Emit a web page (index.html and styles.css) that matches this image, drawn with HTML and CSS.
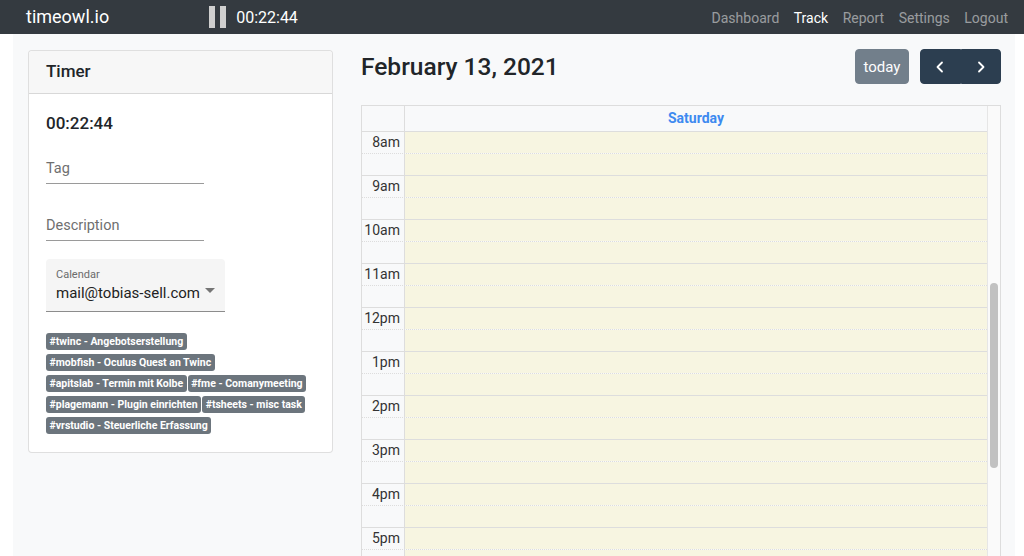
FILE: index.html
```html
<!DOCTYPE html>
<html lang="en">
<head>
<meta charset="utf-8">
<title>timeowl.io</title>
<link rel="stylesheet" href="styles.css">
</head>
<body>
<nav class="navbar">
  <a class="brand" href="#">timeowl.io</a>
  <div class="running">
    <span class="pause"><span class="bar"></span><span class="bar"></span></span>
    <span class="running-time">00:22:44</span>
  </div>
  <ul class="nav">
    <li><a href="#">Dashboard</a></li>
    <li><a href="#" class="active">Track</a></li>
    <li><a href="#">Report</a></li>
    <li><a href="#">Settings</a></li>
    <li><a href="#">Logout</a></li>
  </ul>
</nav>
<main class="page">
  <section class="card">
    <div class="card-header">Timer</div>
    <div class="card-body">
      <div class="timer">00:22:44</div>
      <div class="field field-tag"><span class="field-label">Tag</span></div>
      <div class="field field-desc"><span class="field-label">Description</span></div>
      <div class="select">
        <span class="select-label">Calendar</span>
        <span class="select-value">mail@tobias-sell.com</span>
        <span class="select-arrow"></span>
      </div>
      <div class="badges">
        <span class="badge">#twinc - Angebotserstellung</span>
        <span class="badge">#mobfish - Oculus Quest an Twinc</span>
        <span class="badge">#apitslab - Termin mit Kolbe</span>
        <span class="badge">#fme - Comanymeeting</span>
        <span class="badge">#plagemann - Plugin einrichten</span>
        <span class="badge">#tsheets - misc task</span>
        <span class="badge">#vrstudio - Steuerliche Erfassung</span>
      </div>
    </div>
  </section>
  <section class="calendar-col">
    <div class="toolbar">
      <h2 class="title">February 13, 2021</h2>
      <div class="toolbar-buttons">
        <button class="btn btn-today">today</button>
        <div class="btn-group">
          <button class="btn btn-nav" aria-label="prev"><svg width="14" height="14" viewBox="0 0 14 14"><path d="M9 2.5 4.5 7 9 11.5" fill="none" stroke="#fff" stroke-width="1.8" stroke-linecap="round" stroke-linejoin="round"/></svg></button>
          <button class="btn btn-nav" aria-label="next"><svg width="14" height="14" viewBox="0 0 14 14"><path d="M5 2.5 9.5 7 5 11.5" fill="none" stroke="#fff" stroke-width="1.8" stroke-linecap="round" stroke-linejoin="round"/></svg></button>
        </div>
      </div>
    </div>
    <div class="cal">
      <div class="cal-main">
        <div class="cal-head">
          <div class="axis-head"></div>
          <div class="day-head"><a href="#">Saturday</a></div>
        </div>
        <div class="cal-body">
          <div class="slot"><div class="axis">8am</div><div class="day"></div></div>
          <div class="slot minor"><div class="axis"></div><div class="day"></div></div>
          <div class="slot"><div class="axis">9am</div><div class="day"></div></div>
          <div class="slot minor"><div class="axis"></div><div class="day"></div></div>
          <div class="slot"><div class="axis">10am</div><div class="day"></div></div>
          <div class="slot minor"><div class="axis"></div><div class="day"></div></div>
          <div class="slot"><div class="axis">11am</div><div class="day"></div></div>
          <div class="slot minor"><div class="axis"></div><div class="day"></div></div>
          <div class="slot"><div class="axis">12pm</div><div class="day"></div></div>
          <div class="slot minor"><div class="axis"></div><div class="day"></div></div>
          <div class="slot"><div class="axis">1pm</div><div class="day"></div></div>
          <div class="slot minor"><div class="axis"></div><div class="day"></div></div>
          <div class="slot"><div class="axis">2pm</div><div class="day"></div></div>
          <div class="slot minor"><div class="axis"></div><div class="day"></div></div>
          <div class="slot"><div class="axis">3pm</div><div class="day"></div></div>
          <div class="slot minor"><div class="axis"></div><div class="day"></div></div>
          <div class="slot"><div class="axis">4pm</div><div class="day"></div></div>
          <div class="slot minor"><div class="axis"></div><div class="day"></div></div>
          <div class="slot"><div class="axis">5pm</div><div class="day"></div></div>
          <div class="slot minor"><div class="axis"></div><div class="day"></div></div>
          <div class="slot"><div class="axis">6pm</div><div class="day"></div></div>
        </div>
      </div>
      <div class="cal-scroll"><div class="thumb"></div></div>
    </div>
  </section>
</main>
</body>
</html>
```
FILE: styles.css
```css
* { box-sizing: border-box; }
html, body { margin: 0; height: 100%; }
body {
  font-family: Roboto, "Liberation Sans", Arial, sans-serif;
  background: #fff;
  color: #212529;
  overflow: hidden;
}
a { text-decoration: none; }

.navbar {
  height: 34px;
  background: #343a40;
  display: flex;
  align-items: center;
  padding: 0 16px 0 26px;
}
.brand {
  color: #fff;
  font-size: 18px;
  line-height: 34px;
}
.running {
  display: flex;
  align-items: center;
  margin-left: 100px;
}
.pause { display: flex; gap: 5px; }
.pause .bar {
  width: 6px;
  height: 22px;
  background: #cfcfcf;
}
.running-time {
  color: #fff;
  font-size: 16px;
  margin-left: 10px;
}
.nav {
  list-style: none;
  margin: 0 0 0 auto;
  padding: 0;
  display: flex;
  gap: 14.5px;
}
.nav a {
  color: rgba(255,255,255,0.5);
  font-size: 14px;
}
.nav a.active { color: #fff; }

.page {
  margin-left: 13px;
  width: 1002px;
  height: calc(100% - 34px);
  background: #f8f9fa;
  display: grid;
  grid-template-columns: 305px 640px;
  column-gap: 28px;
  align-items: start;
  padding: 16px 14px 0 15px;
}

.card {
  background: #fff;
  border: 1px solid rgba(0,0,0,0.125);
  border-radius: 4px;
}
.card-header {
  height: 43px;
  background: #f7f7f7;
  border-bottom: 1px solid rgba(0,0,0,0.125);
  border-radius: 4px 4px 0 0;
  padding: 0 17px;
  font-size: 17px;
  font-weight: 500;
  line-height: 41px;
}
.card-body { padding: 19px 17px 18px; }
.timer {
  font-size: 17px;
  font-weight: 500;
  line-height: 20px;
}
.field {
  width: 158px;
  height: 50px;
  border-bottom: 1px solid #9a9a9a;
  display: flex;
  align-items: flex-end;
  padding-bottom: 4px;
}
.field-tag { margin-top: 1px; }
.field-desc { margin-top: 7px; }
.field-label {
  color: #6f6f6f;
  font-size: 14.5px;
  line-height: 20px;
}
.select {
  position: relative;
  margin-top: 18px;
  width: 179px;
  height: 53px;
  background: #f5f5f5;
  border-radius: 4px 4px 0 0;
  border-bottom: 1px solid #8c8c8c;
  padding: 9px 10px 0;
  display: flex;
  flex-direction: column;
}
.select-label {
  font-size: 11px;
  color: #6b6b6b;
  line-height: 13px;
}
.select-value {
  font-size: 15px;
  color: #222;
  line-height: 22px;
  margin-top: 1px;
}
.select-arrow {
  position: absolute;
  right: 10px;
  top: 29px;
  width: 0;
  height: 0;
  border-left: 5px solid transparent;
  border-right: 5px solid transparent;
  border-top: 5px solid #757575;
}
.badges {
  margin-top: 21px;
  display: flex;
  flex-wrap: wrap;
  column-gap: 1px;
  row-gap: 4px;
}
.badge {
  background: #6c757d;
  color: #fff;
  font-size: 10.5px;
  font-weight: 700;
  line-height: 11px;
  padding: 3px 3.5px;
  border-radius: 3px;
  white-space: nowrap;
}

.calendar-col { display: flex; flex-direction: column; }
.toolbar {
  display: flex;
  align-items: center;
  justify-content: space-between;
  height: 35px;
  margin-top: -1px;
  margin-bottom: 21px;
}
.title {
  margin: 0;
  font-size: 24.5px;
  font-weight: 500;
  color: #212529;
  line-height: 30px;
}
.toolbar-buttons { display: flex; gap: 11px; }
.btn {
  font-family: inherit;
  border: 1px solid #2c3e50;
  background: #2c3e50;
  color: #fff;
  height: 35px;
  font-size: 15px;
  border-radius: 4px;
  padding: 0 10px;
  cursor: pointer;
}
.btn-today { opacity: 0.65; width: 54px; padding: 0; }
.btn-group { display: flex; }
.btn-nav {
  width: 40.5px;
  padding: 0;
  display: flex;
  align-items: center;
  justify-content: center;
}
.btn-group .btn-nav:first-child { border-radius: 4px 0 0 4px; }
.btn-group .btn-nav:last-child { border-radius: 0 4px 4px 0; }

.cal {
  display: flex;
  border: 1px solid #ddd;
  height: 460px;
}
.cal-main { flex: 1; display: flex; flex-direction: column; }
.cal-head {
  display: grid;
  grid-template-columns: 43px 1fr;
  height: 26px;
  border-bottom: 1px solid #ddd;
}
.axis-head { border-right: 1px solid #ddd; }
.day-head {
  text-align: center;
  line-height: 25px;
  font-size: 14px;
  font-weight: 700;
}
.day-head a { color: #3d8af0; }
.slot {
  display: grid;
  grid-template-columns: 43px 1fr;
  height: 22px;
  border-top: 1px solid #ddd;
}
.slot:first-child { border-top: 0; height: 21px; }
.slot.minor { border-top: 1px dotted #ddd; }
.axis {
  border-right: 1px solid #ddd;
  text-align: right;
  padding-right: 4px;
  font-size: 14px;
  line-height: 21px;
  color: #333;
}
.day { background: #f7f5e1; }
.cal-scroll {
  width: 13px;
  border-left: 1px solid #e6e6e6;
  background: #fafafa;
  padding: 177px 2px 0 2px;
}
.thumb {
  width: 8px;
  height: 185px;
  background: #c1c1c1;
  border-radius: 4px;
}
```
